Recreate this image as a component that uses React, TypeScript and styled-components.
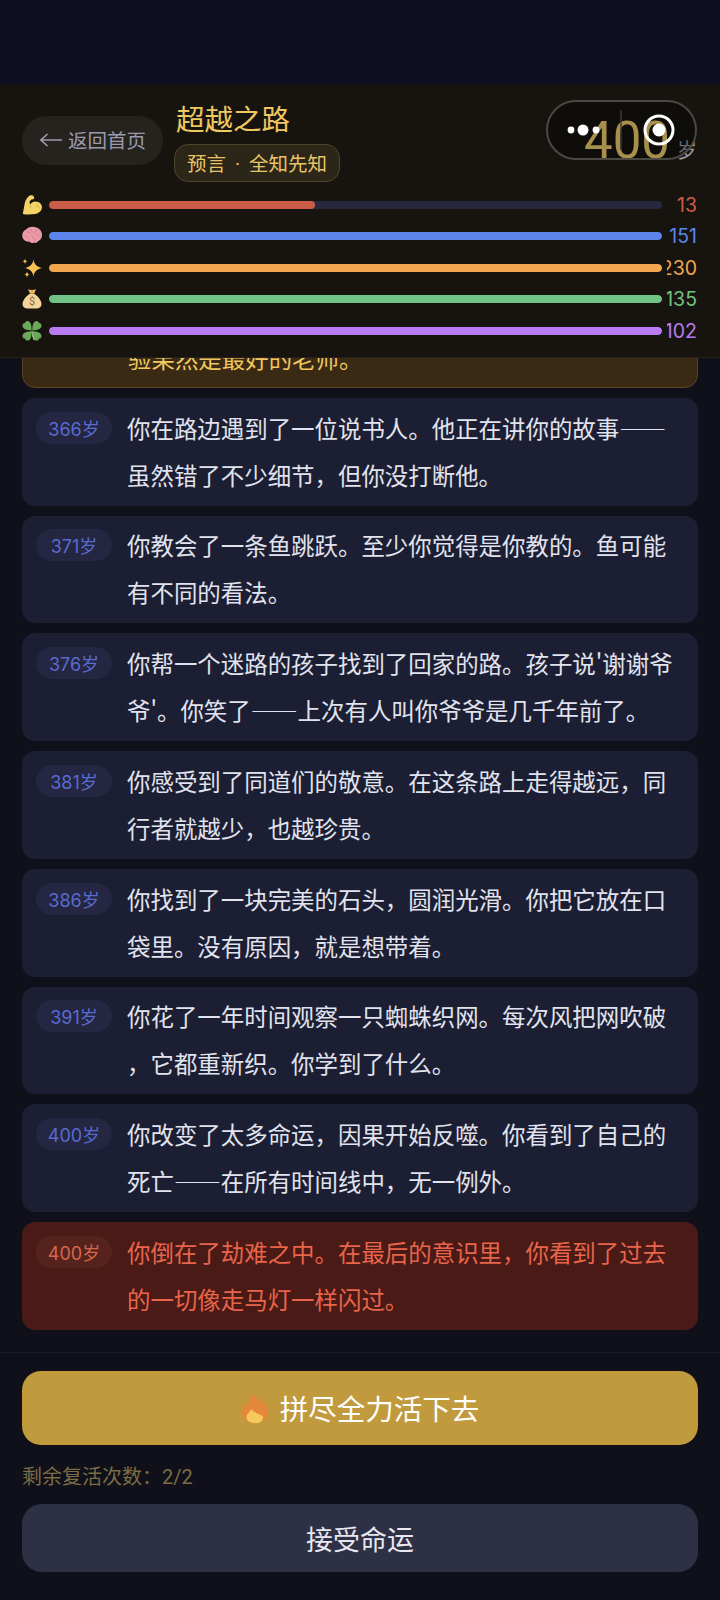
import React from "react";
import styled, { createGlobalStyle } from "styled-components";

const cjk = `"Noto Sans CJK SC", "Noto Sans", sans-serif`;
const latin = `Roboto, "Noto Sans CJK SC", sans-serif`;
const numeric = `Inter, "Noto Sans CJK SC", sans-serif`;

const Global = createGlobalStyle`
  html, body { margin: 0; padding: 0; background: #0f1019; }
  * { box-sizing: border-box; }
`;

const Screen = styled.div`
  position: relative;
  width: 720px;
  height: 1600px;
  overflow: hidden;
  display: flex;
  flex-direction: column;
  background: #0f1019;
  font-family: ${cjk};
`;

const SafeArea = styled.div`
  height: 84px;
  flex: none;
  background: #0e1022;
`;

const Header = styled.header`
  position: relative;
  z-index: 2;
  flex: none;
  height: 274px;
  padding: 14px 23px 0 22px;
  background: #17140f;
  border-bottom: 1px solid #25221c;
`;

const TopRow = styled.div`
  display: flex;
  align-items: center;
  gap: 12px;
  height: 84px;
`;

const BackButton = styled.button`
  display: flex;
  align-items: center;
  justify-content: center;
  gap: 6px;
  width: 141px;
  height: 49px;
  padding: 0 0 0 1px;
  border: none;
  border-radius: 25px;
  background: #26231f;
  color: #9b9bb0;
  font: 400 19.5px/1 ${cjk};
`;

const TitleBlock = styled.div`
  display: flex;
  flex-direction: column;
  align-items: flex-start;
  gap: 6px;
`;

const Title = styled.h1`
  margin: 0 0 0 1px;
  font: 400 28.5px/40px ${cjk};
  color: #f0c860;
`;

const Tag = styled.span`
  display: block;
  height: 38px;
  margin-left: -1px;
  padding: 0 12px;
  border: 1px solid #4f452a;
  border-radius: 14px;
  background: #2b2617;
  color: #e8c468;
  font: 400 19.5px/36px ${cjk};
  white-space: nowrap;
`;

const TagDot = styled.span`
  display: inline-block;
  width: 23px;
  text-align: center;
  font-family: ${latin};
`;

const Age = styled.div`
  margin-left: auto;
  display: flex;
  align-items: baseline;
  gap: 7px;
  padding-top: 2px;
`;

const AgeNumber = styled.span`
  font: 400 51px/50px ${latin};
  color: #fad770;
`;

const AgeUnit = styled.span`
  font: 400 20px/20px ${cjk};
  color: #9a9aa6;
`;

const Capsule = styled.div`
  position: absolute;
  left: 546px;
  top: 16px;
  width: 151px;
  height: 60px;
  border: 2px solid #4a4843;
  border-radius: 30px;
  background: rgba(0, 0, 0, 0.33);
`;

const CapsuleGlyphs = styled.svg`
  display: block;
`;

const Stats = styled.div`
  margin-top: 7px;
  display: flex;
  flex-direction: column;
`;

const StatRow = styled.div`
  display: flex;
  align-items: center;
  height: 31.5px;
`;

const StatIcon = styled.svg`
  flex: none;
  width: 20px;
  height: 20px;
  margin-right: 7px;
`;

const Track = styled.div`
  flex: none;
  width: 613px;
  height: 8px;
  border-radius: 4px;
  background: #26283e;
  overflow: hidden;
`;

const Fill = styled.div<{ $color: string }>`
  height: 100%;
  border-radius: 4px;
  background: ${(p) => p.$color};
`;

const StatValue = styled.div<{ $color: string }>`
  flex: none;
  width: 30px;
  margin-left: 5px;
  display: flex;
  justify-content: flex-end;
  overflow: hidden;
  font: 400 19.5px/26px ${numeric};
  color: ${(p) => p.$color};
`;

const Timeline = styled.div`
  flex: none;
  margin-top: -78px;
  padding: 0 22px;
  display: flex;
  flex-direction: column;
  gap: 10px;
`;

type Tone = "normal" | "gold" | "danger";

const cardBg: Record<Tone, string> = { normal: "#1c1f33", gold: "#3a2a14", danger: "#4a1a17" };
const cardText: Record<Tone, string> = { normal: "#e1e3ee", gold: "#f0c860", danger: "#e8654a" };
const pillBg: Record<Tone, string> = { normal: "#242642", gold: "#4a3a1c", danger: "#55231c" };
const pillText: Record<Tone, string> = { normal: "#5a6bd0", gold: "#f0c860", danger: "#d8664c" };

const Card = styled.article<{ $tone: Tone }>`
  display: flex;
  align-items: flex-start;
  gap: 15px;
  height: 107.75px;
  padding: 6.87px 14px;
  border-radius: 13px;
  background: ${(p) => cardBg[p.$tone]};
  border: ${(p) => (p.$tone === "gold" ? "1px solid #5a4528" : "none")};
  color: ${(p) => cardText[p.$tone]};
`;

const AgePill = styled.span<{ $tone: Tone }>`
  flex: none;
  width: 76px;
  height: 32px;
  margin-top: 7px;
  border-radius: 16px;
  background: ${(p) => pillBg[p.$tone]};
  color: ${(p) => pillText[p.$tone]};
  font: 400 18px/35px ${numeric};
  text-align: center;
  white-space: nowrap;
`;

const Story = styled.div`
  font-size: 23.45px;
  line-height: 47px;
`;

const StoryLine = styled.div`
  white-space: nowrap;
`;

const Footer = styled.footer`
  flex: none;
  margin-top: auto;
  height: 248px;
  padding: 18px 22px 0;
  border-top: 1px solid #1a1b28;
`;

const PrimaryButton = styled.button`
  display: flex;
  align-items: center;
  justify-content: center;
  gap: 11px;
  width: 100%;
  height: 74px;
  border: none;
  border-radius: 19px;
  background: #c09a3c;
  color: #fff;
  font: 400 28.5px/1 ${cjk};
`;

const Hint = styled.p`
  margin: 19px 0 14px;
  font: 400 20px/26px ${latin};
  color: #7c6c45;
`;

const SecondaryButton = styled.button`
  display: block;
  width: 100%;
  height: 68px;
  border: none;
  border-radius: 20px;
  background: #2e3045;
  color: #e8e8f0;
  font: 400 27px/1 ${cjk};
`;

const Arrow = () => (
  <svg width="22" height="14" viewBox="0 0 22 14" fill="none" stroke="#9b9bb0" strokeWidth="1.6">
    <path d="M1 7H22M7.500 1 1 7l6.500 6" />
  </svg>
);

const Flame = () => (
  <svg width="28" height="30" viewBox="0 0 28 30">
    <path
      d="M14 30C6 30 1 26 1 20 1 16 2.500 13 3.500 9.500c1.300 1.500 2 3 2.700 4.500C7 9 9.500 4 12.500 0c.3 4 3.700 6.500 5.300 10.500.8-1.500 1.400-3.500 1.200-6.500 3.500 3.500 8 9.500 8 16 0 6-5 10-13 10Z"
      fill="#e5883c"
    />
    <path d="M14 30c-5 0-8.500-2.300-8.500-6 0-3 3-4.500 5-8 1 2 2.300 3 4 3 .8 1.500 1.800 2 2.700 1.500 1.300 1.300 4.800 2 4.800 3.500 0 3.700-3 6.500-8 6.500Z" fill="#f6c95d" />
  </svg>
);

const Muscle = () => (
  <StatIcon viewBox="0 0 20 20">
    <path
      d="M.8 19 2.600 9C3 6 4.500 3.500 6.500 1.500 7.600.3 9.500-.2 10.800.5c1 .6 1.500 1.800 1.300 2.800-.3 1-1.600 1.300-3 1.400L7.600 6.500c-.4 1 0 2.200.8 2.800C9.500 7 13 5.700 16 7c2.600 1 4.200 3.200 3.900 5.800-.3 3-3 5.700-7 6.300-4 .6-8.500.7-12.100-.1Z"
      fill="#f2d469"
    />
    <path d="M8.500 9.500c-.4 1-.4 2.200.2 3.200M14 10.500c1.700.3 3 1.400 3.500 3" stroke="#d8ae3f" strokeWidth="1" fill="none" />
  </StatIcon>
);

const Brain = () => (
  <StatIcon viewBox="0 0 20 20">
    <path
      d="M4 3.500C6 .8 11-.2 14.500 1.500 17.500 2.600 19.800 5 20 8.500c.2 3.400-1.500 5.800-4 6.800-1 1.500-2.500 2.200-3.800 1.200-1.500 1-3.400.5-4.500-.7C4.500 16 1.500 14.500.5 11.500-.4 8 1 5 4 3.500Z"
      fill="#eb9aa8"
    />
    <path
      d="M4 6.500c2-1.500 4-.5 4.500 1M9 3c-.5 2 1 3 2.500 3M14 3.500c.5 2-.5 3.500-2 4M2.500 10.500c1.800-.5 3.500.5 4 2M9 9.500c2 .5 3 2 2.500 4M14 8.500c2 0 3.500 1 4 2.500M14.500 12c-.3 1.200-1 2-2 2.500"
      stroke="#d5798f"
      strokeWidth="0.9"
      fill="none"
    />
  </StatIcon>
);

const Sparkles = () => (
  <StatIcon viewBox="0 0 20 20">
    <path d="M11.500 1.500c.8 4.800 3 7 8.500 8.500-5.500 1.500-7.700 3.700-8.500 8.500C10.700 13.700 8.500 11.500 3 10c5.500-1.500 7.700-3.700 8.500-8.500Z" fill="#f6c155" />
    <path d="M3 .5c.3 1.800 1 2.500 2.800 2.800C4 3.600 3.300 4.300 3 6.100 2.700 4.300 2 3.600.2 3.300 2 3 2.700 2.300 3 .5Z" fill="#f6c155" />
    <path d="M5 13.500c.3 1.900 1 2.600 2.800 3-1.800.4-2.500 1.100-2.800 3-.3-1.900-1-2.600-2.800-3 1.800-.4 2.500-1.100 2.800-3Z" fill="#f6c155" />
  </StatIcon>
);

const MoneyBag = () => (
  <StatIcon viewBox="0 0 20 20">
    <path d="M6 .3c2 .8 5.500.8 8 0l-1.800 4.500H8L6 .3Z" fill="#e7b560" />
    <path d="M7.500 5h5c3.500 2.400 7 6.500 7 10 0 3-2.500 4.500-5 4.500h-9c-2.500 0-5-1.500-5-4.500 0-3.500 3.500-7.600 7-10Z" fill="#f5d49a" />
    <text x="10" y="16" fontSize="11" textAnchor="middle" fill="#8a6c3c" fontFamily="Roboto, sans-serif">$</text>
  </StatIcon>
);

const Clover = () => (
  <StatIcon viewBox="0 0 20 20">
    <g fill="#6aa85a">
      <path d="M9.700 9.500C6 9.200 1 8.600.5 5 .3 2.600 2 2 3.300 2c0-1.400 1-2.200 3-1.800 3 .6 3.400 5.700 3.400 9.300Z" />
      <path d="M10.300 9.500c3.700-.3 8.700-.9 9.200-4.500.2-2.400-1.500-3-2.800-3 0-1.400-1-2.200-3-1.800-3 .6-3.400 5.700-3.400 9.300Z" />
      <path d="M9.700 10.200C6 10.500 1 11 .5 14.700c-.2 2.400 1.500 3 2.800 3 0 1.400 1 2.200 3 1.800 3-.6 3.400-5.700 3.400-9.300Z" />
      <path d="M10.300 10.200c3.700.3 8.700.8 9.200 4.500.2 2.400-1.500 3-2.800 3 0 1.400-1 2.200-3 1.800-3-.6-3.400-5.700-3.400-9.300Z" />
    </g>
    <path d="M10 10c.3 3.500 1 6.500 2 9" stroke="#a9cf95" strokeWidth="1" fill="none" />
  </StatIcon>
);

const stats = [
  { icon: <Muscle />, color: "#cc5c48", value: 13, pct: 43.4 },
  { icon: <Brain />, color: "#5b85ec", value: 151, pct: 100 },
  { icon: <Sparkles />, color: "#f2a64e", value: 230, pct: 100 },
  { icon: <MoneyBag />, color: "#70c285", value: 135, pct: 100 },
  { icon: <Clover />, color: "#b87bf2", value: 102, pct: 100 },
];

const entries: { age: number; lines: string[]; tone?: Tone }[] = [
  { age: 361, tone: "gold", lines: ["你又熬过了一次失败，心里只剩一句话：经", "验果然是最好的老师。"] },
  { age: 366, lines: ["你在路边遇到了一位说书人。他正在讲你的故事——", "虽然错了不少细节，但你没打断他。"] },
  { age: 371, lines: ["你教会了一条鱼跳跃。至少你觉得是你教的。鱼可能", "有不同的看法。"] },
  { age: 376, lines: ["你帮一个迷路的孩子找到了回家的路。孩子说'谢谢爷", "爷'。你笑了——上次有人叫你爷爷是几千年前了。"] },
  { age: 381, lines: ["你感受到了同道们的敬意。在这条路上走得越远，同", "行者就越少，也越珍贵。"] },
  { age: 386, lines: ["你找到了一块完美的石头，圆润光滑。你把它放在口", "袋里。没有原因，就是想带着。"] },
  { age: 391, lines: ["你花了一年时间观察一只蜘蛛织网。每次风把网吹破", "，它都重新织。你学到了什么。"] },
  { age: 400, lines: ["你改变了太多命运，因果开始反噬。你看到了自己的", "死亡——在所有时间线中，无一例外。"] },
  { age: 400, tone: "danger", lines: ["你倒在了劫难之中。在最后的意识里，你看到了过去", "的一切像走马灯一样闪过。"] },
];

export default function App() {
  return (
    <Screen lang="zh-CN">
      <Global />
      <SafeArea />
      <Header>
        <TopRow>
          <BackButton>
            <Arrow />
            返回首页
          </BackButton>
          <TitleBlock>
            <Title>超越之路</Title>
            <Tag>
              预言<TagDot>·</TagDot>全知先知
            </Tag>
          </TitleBlock>
          <Age>
            <AgeNumber>400</AgeNumber>
            <AgeUnit>岁</AgeUnit>
          </Age>
        </TopRow>
        <Stats>
          {stats.map((s) => (
            <StatRow key={s.color}>
              {s.icon}
              <Track>
                <Fill $color={s.color} style={{ width: `${s.pct}%` }} />
              </Track>
              <StatValue $color={s.color}>
                <span>{s.value}</span>
              </StatValue>
            </StatRow>
          ))}
        </Stats>
        <Capsule>
          <CapsuleGlyphs width="147" height="56" viewBox="0 0 147 56">
            <circle cx="23" cy="28" r="3.400" fill="#fff" />
            <circle cx="35" cy="28" r="5.500" fill="#fff" />
            <circle cx="48" cy="28" r="3.400" fill="#fff" />
            <path d="M73 8v40" stroke="#3c3a36" strokeWidth="1.500" />
            <circle cx="111" cy="28" r="14" fill="none" stroke="#fff" strokeWidth="3" />
            <circle cx="111" cy="28" r="6.500" fill="#fff" />
          </CapsuleGlyphs>
        </Capsule>
      </Header>
      <Timeline>
        {entries.map((e, i) => (
          <Card key={i} $tone={e.tone ?? "normal"}>
            <AgePill $tone={e.tone ?? "normal"}>{e.age}岁</AgePill>
            <Story>
              {e.lines.map((l) => (
                <StoryLine key={l}>{l}</StoryLine>
              ))}
            </Story>
          </Card>
        ))}
      </Timeline>
      <Footer>
        <PrimaryButton>
          <Flame />
          拼尽全力活下去
        </PrimaryButton>
        <Hint>剩余复活次数：2/2</Hint>
        <SecondaryButton>接受命运</SecondaryButton>
      </Footer>
    </Screen>
  );
}
